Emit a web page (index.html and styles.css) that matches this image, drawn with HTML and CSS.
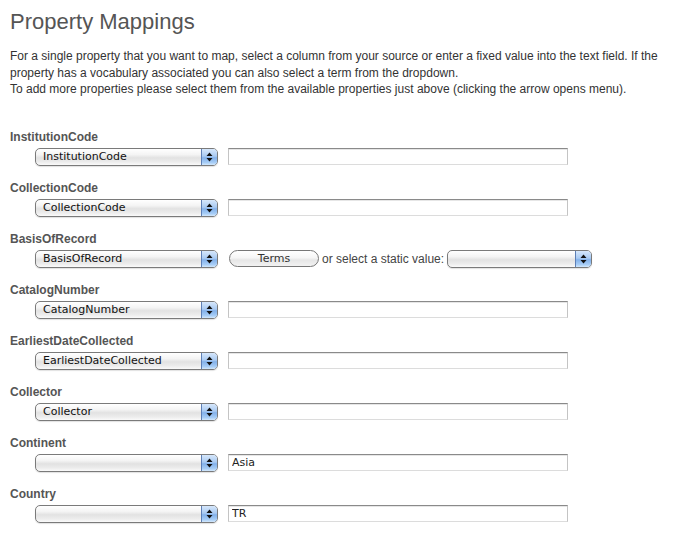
FILE: index.html
```html
<!DOCTYPE html>
<html>
<head>
<meta charset="utf-8">
<link rel="stylesheet" href="styles.css">
</head>
<body>
<h1 class="title">Property Mappings</h1>
<p class="intro">For a single property that you want to map, select a column from your source or enter a fixed value into the text field. If the property has a vocabulary associated you can also select a term from the dropdown.<br>To add more properties please select them from the available properties just above (clicking the arrow opens menu).</p>

<div class="fields">
  <div class="field">
    <div class="label">InstitutionCode</div>
    <div class="controls">
      <div class="select"><span class="value">InstitutionCode</span><span class="arrows"><svg width="7" height="10" viewBox="0 0 7 10"><path d="M3.5 0.5 L6.5 4 L0.5 4 Z M3.5 9.5 L6.5 6 L0.5 6 Z" fill="#111"/></svg></span></div>
      <input class="text" type="text" value="">
    </div>
  </div>
  <div class="field">
    <div class="label">CollectionCode</div>
    <div class="controls">
      <div class="select"><span class="value">CollectionCode</span><span class="arrows"><svg width="7" height="10" viewBox="0 0 7 10"><path d="M3.5 0.5 L6.5 4 L0.5 4 Z M3.5 9.5 L6.5 6 L0.5 6 Z" fill="#111"/></svg></span></div>
      <input class="text" type="text" value="">
    </div>
  </div>
  <div class="field">
    <div class="label">BasisOfRecord</div>
    <div class="controls">
      <div class="select"><span class="value">BasisOfRecord</span><span class="arrows"><svg width="7" height="10" viewBox="0 0 7 10"><path d="M3.5 0.5 L6.5 4 L0.5 4 Z M3.5 9.5 L6.5 6 L0.5 6 Z" fill="#111"/></svg></span></div>
      <span class="button">Terms</span>
      <span class="or">or select a static value:</span>
      <div class="select small"><span class="value"></span><span class="arrows"><svg width="7" height="10" viewBox="0 0 7 10"><path d="M3.5 0.5 L6.5 4 L0.5 4 Z M3.5 9.5 L6.5 6 L0.5 6 Z" fill="#111"/></svg></span></div>
    </div>
  </div>
  <div class="field">
    <div class="label">CatalogNumber</div>
    <div class="controls">
      <div class="select"><span class="value">CatalogNumber</span><span class="arrows"><svg width="7" height="10" viewBox="0 0 7 10"><path d="M3.5 0.5 L6.5 4 L0.5 4 Z M3.5 9.5 L6.5 6 L0.5 6 Z" fill="#111"/></svg></span></div>
      <input class="text" type="text" value="">
    </div>
  </div>
  <div class="field">
    <div class="label">EarliestDateCollected</div>
    <div class="controls">
      <div class="select"><span class="value">EarliestDateCollected</span><span class="arrows"><svg width="7" height="10" viewBox="0 0 7 10"><path d="M3.5 0.5 L6.5 4 L0.5 4 Z M3.5 9.5 L6.5 6 L0.5 6 Z" fill="#111"/></svg></span></div>
      <input class="text" type="text" value="">
    </div>
  </div>
  <div class="field">
    <div class="label">Collector</div>
    <div class="controls">
      <div class="select"><span class="value">Collector</span><span class="arrows"><svg width="7" height="10" viewBox="0 0 7 10"><path d="M3.5 0.5 L6.5 4 L0.5 4 Z M3.5 9.5 L6.5 6 L0.5 6 Z" fill="#111"/></svg></span></div>
      <input class="text" type="text" value="">
    </div>
  </div>
  <div class="field">
    <div class="label">Continent</div>
    <div class="controls">
      <div class="select"><span class="value"></span><span class="arrows"><svg width="7" height="10" viewBox="0 0 7 10"><path d="M3.5 0.5 L6.5 4 L0.5 4 Z M3.5 9.5 L6.5 6 L0.5 6 Z" fill="#111"/></svg></span></div>
      <input class="text" type="text" value="Asia">
    </div>
  </div>
  <div class="field">
    <div class="label">Country</div>
    <div class="controls">
      <div class="select"><span class="value"></span><span class="arrows"><svg width="7" height="10" viewBox="0 0 7 10"><path d="M3.5 0.5 L6.5 4 L0.5 4 Z M3.5 9.5 L6.5 6 L0.5 6 Z" fill="#111"/></svg></span></div>
      <input class="text" type="text" value="TR">
    </div>
  </div>
</div>
</body>
</html>
```
FILE: styles.css
```css
html, body {
  margin: 0;
  padding: 0;
  background: #fff;
}
body {
  padding: 0 10px;
  font-family: "Liberation Sans", Arial, sans-serif;
  color: #333;
}
.title {
  margin: 9px 0 0 0;
  font-size: 22px;
  line-height: 26px;
  font-weight: normal;
  color: #555;
}
.intro {
  margin: 13px 0 0 0;
  font-size: 12px;
  line-height: 16.5px;
  color: #333;
}
.fields {
  margin-top: 32px;
}
.field {
  height: 51px;
}
.label {
  font-size: 12px;
  font-weight: bold;
  line-height: 15px;
  color: #555;
}
.controls {
  margin-top: 3px;
  padding-left: 25px;
  display: flex;
  align-items: center;
  height: 18px;
}
.select {
  box-sizing: border-box;
  width: 183px;
  height: 18px;
  border: 1px solid #7a7a7a;
  border-radius: 5px;
  background: linear-gradient(#ffffff 0%, #f4f4f4 35%, #e2e2e2 55%, #ececec 80%, #fafafa 100%);
  display: flex;
  align-items: stretch;
  overflow: hidden;
  box-shadow: 0 1px 1px rgba(0,0,0,0.12);
}
.select .value {
  flex: 1;
  padding-left: 7px;
  font-family: "DejaVu Sans", sans-serif;
  font-size: 11px;
  line-height: 16px;
  color: #111;
  white-space: nowrap;
}
.select .arrows {
  width: 15px;
  border-left: 1px solid #5d7fb6;
  background: linear-gradient(#d6e7fb 0%, #a9caf2 45%, #83b1ea 55%, #a7cdf6 85%, #d3e8fc 100%);
  display: flex;
  align-items: center;
  justify-content: center;
}
.select.small {
  width: 145px;
}
.text {
  box-sizing: border-box;
  margin: 0 0 0 10px;
  width: 340px;
  height: 17px;
  padding: 0 0 0 3px;
  border: 1px solid #c4c4c4;
  border-top-color: #8a8a8a;
  border-bottom-color: #dcdcdc;
  font-family: "DejaVu Sans", sans-serif;
  font-size: 11px;
  color: #222;
  outline: none;
  background: #fff;
  box-shadow: inset 0 1px 0 #e6e6e6;
}
.button {
  box-sizing: border-box;
  margin-left: 11px;
  width: 90px;
  height: 17px;
  border: 1px solid #777;
  border-radius: 9px;
  background: linear-gradient(#ffffff 0%, #f6f6f6 45%, #e6e6e6 60%, #f2f2f2 100%);
  font-family: "DejaVu Sans", sans-serif;
  font-size: 11px;
  line-height: 16px;
  text-align: center;
  color: #333;
}
.or {
  margin: 0 3px 0 3px;
  font-size: 12px;
  color: #444;
}
```
